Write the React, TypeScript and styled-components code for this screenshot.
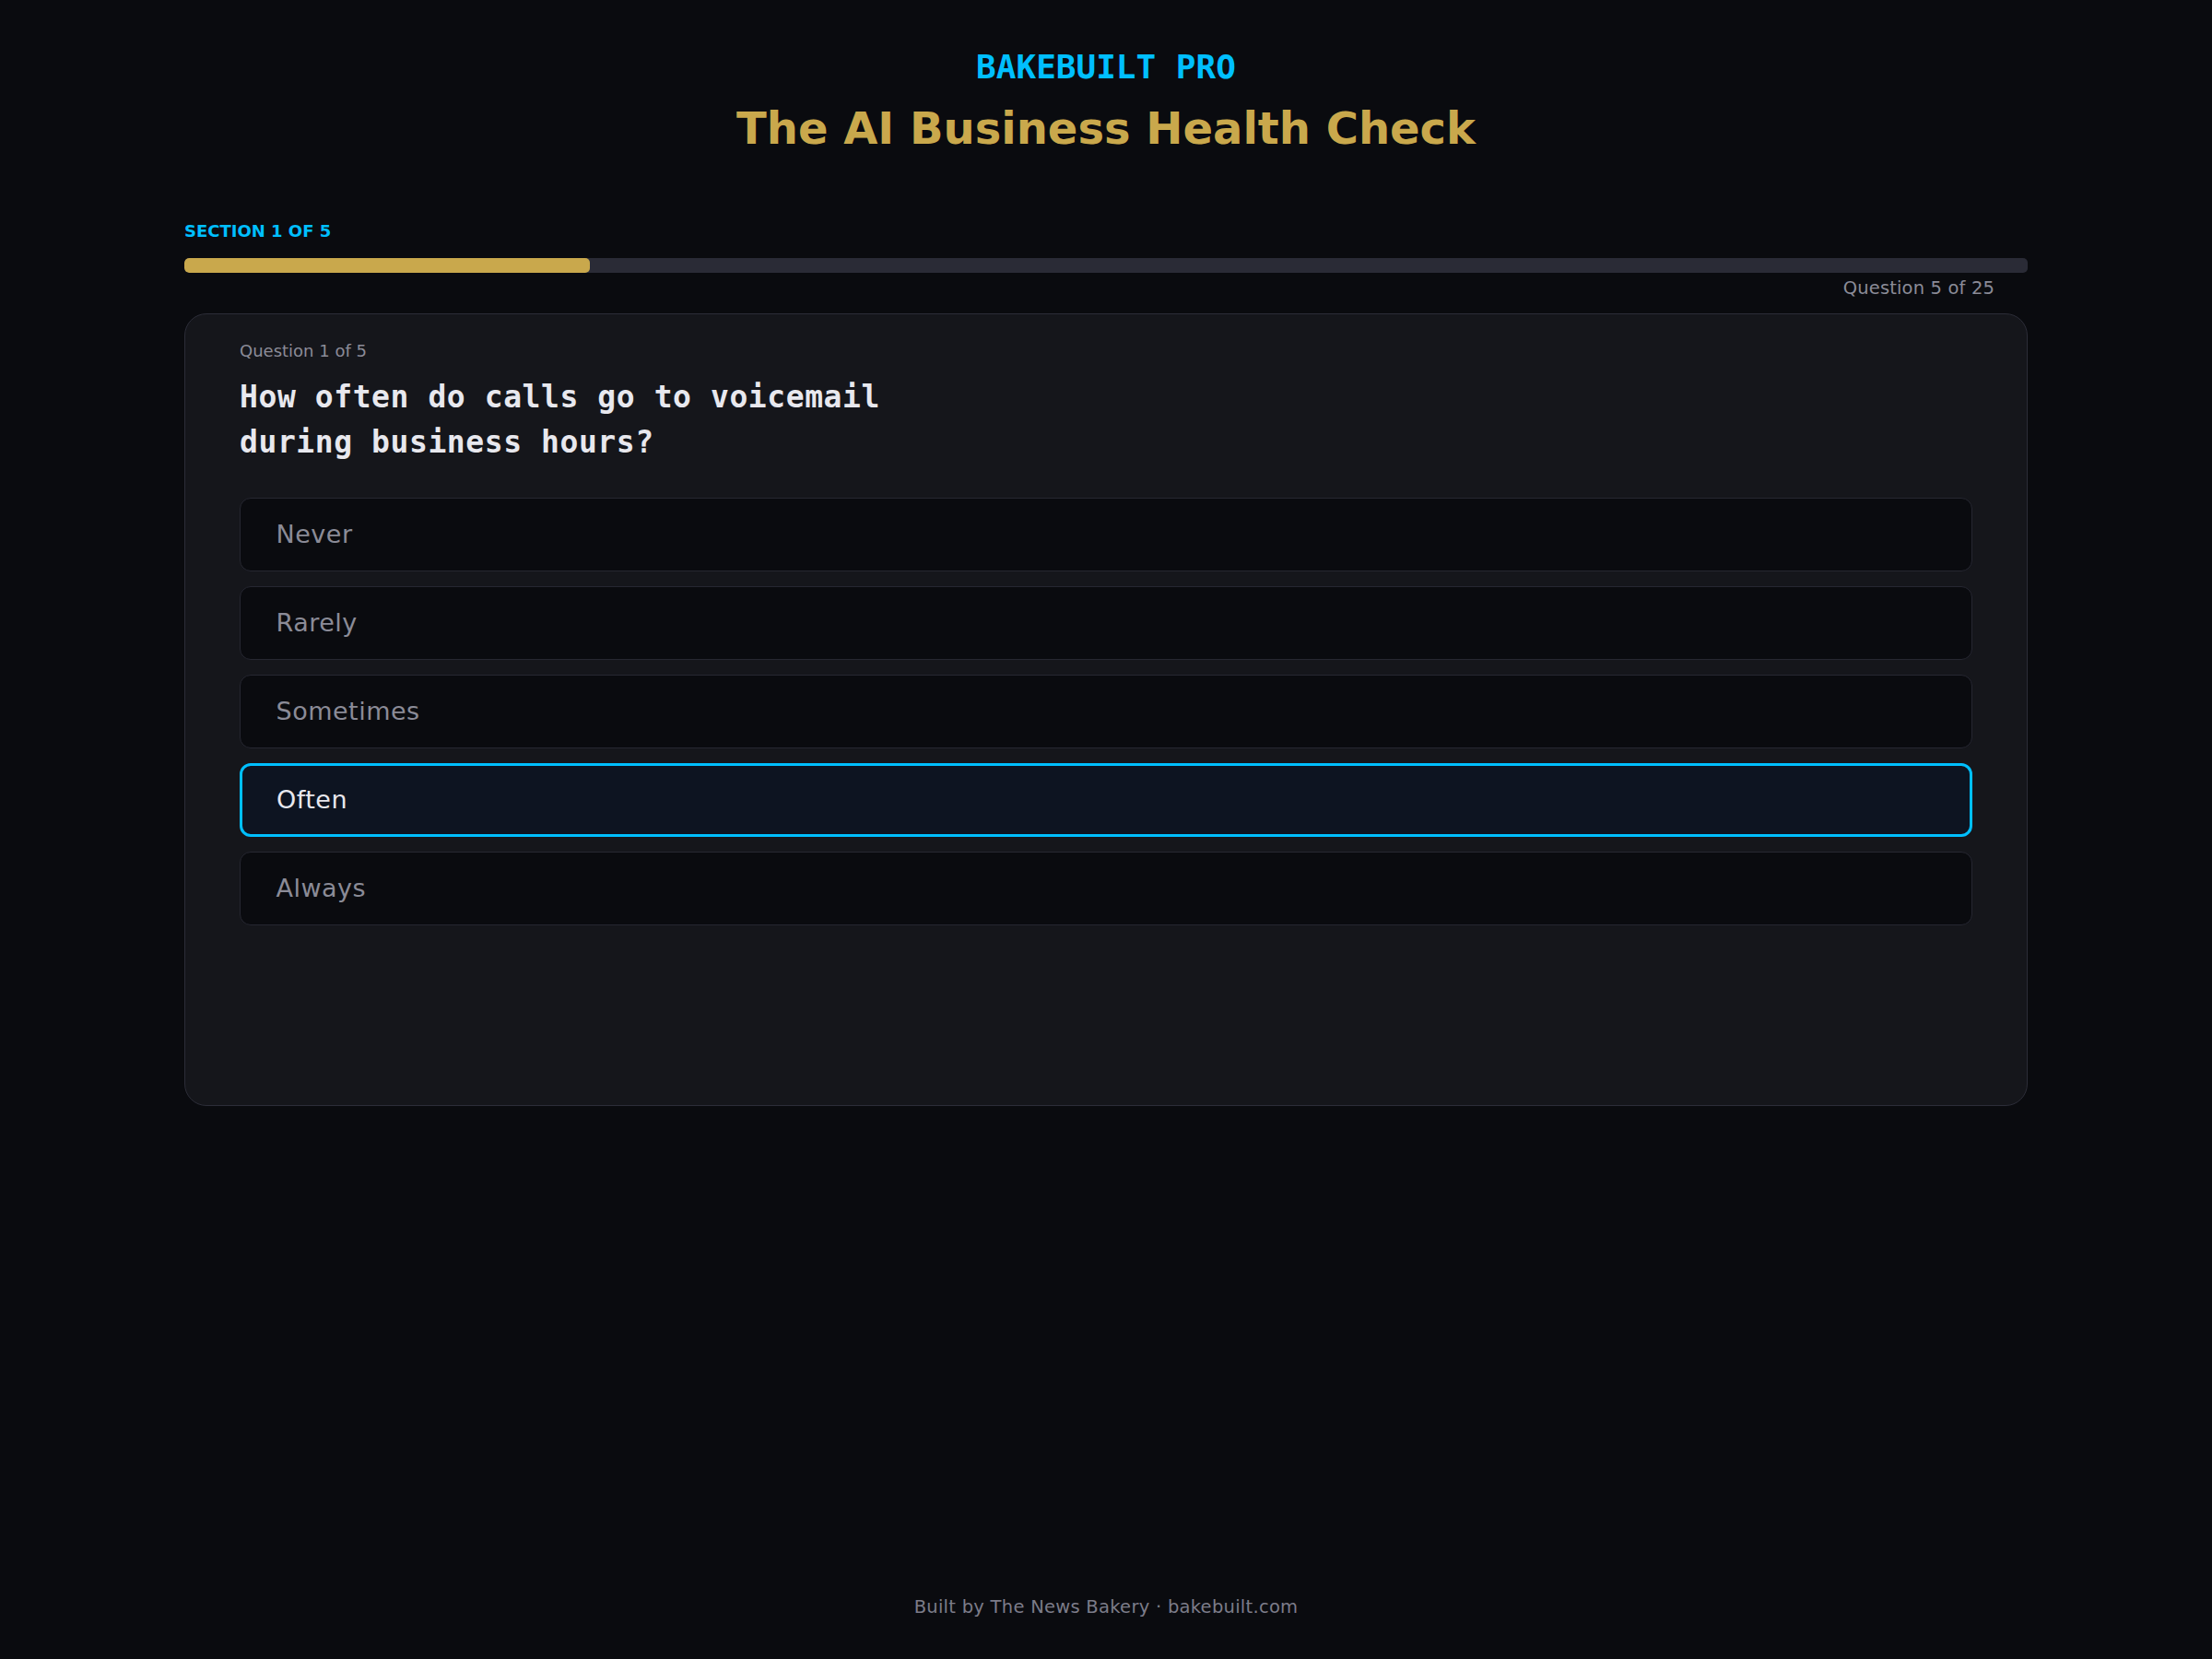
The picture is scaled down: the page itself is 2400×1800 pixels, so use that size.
import React from 'react'
import styled, { createGlobalStyle } from 'styled-components'

const colors = {
    bg: '#0a0b0f',
    card: '#15161b',
    cardBorder: '#2c2d38',
    option: '#0a0b0f',
    optionBorder: '#262731',
    selectedBg: '#0d1421',
    cyan: '#00bfff',
    gold: '#c9a84c',
    track: '#2a2b36',
    text: '#e8e8ee',
    muted: '#8b8b97',
    faint: '#7c7c89',
}

const GlobalStyle = createGlobalStyle`
    html, body {
        margin: 0;
        padding: 0;
        background: ${colors.bg};
    }
    body {
        font-family: 'DejaVu Sans', 'Noto Sans', sans-serif;
        color: ${colors.text};
    }
    * {
        box-sizing: border-box;
    }
`

const Page = styled.div`
    min-height: 100vh;
    display: flex;
    flex-direction: column;
    padding-top: 52px;
`

const Header = styled.header`
    display: flex;
    flex-direction: column;
    align-items: center;
`

const Brand = styled.div`
    font-family: 'DejaVu Sans Mono', 'Liberation Mono', monospace;
    font-weight: 700;
    font-size: 36px;
    line-height: 42px;
    color: ${colors.cyan};
`

const Title = styled.h1`
    margin: 17px 0 0;
    font-size: 48px;
    line-height: 56px;
    font-weight: 700;
    color: ${colors.gold};
`

const Main = styled.main`
    width: 2000px;
    margin: 73px auto 0;
`

const SectionLabel = styled.div`
    font-size: 18px;
    line-height: 22px;
    font-weight: 700;
    text-transform: uppercase;
    color: ${colors.cyan};
`

const Track = styled.div`
    margin-top: 18px;
    height: 16px;
    border-radius: 5px;
    background: ${colors.track};
    overflow: hidden;
`

const Fill = styled.div`
    height: 100%;
    border-radius: 5px;
    background: ${colors.gold};
`

const Count = styled.div`
    margin-top: 5px;
    padding-right: 36px;
    text-align: right;
    font-size: 19.5px;
    line-height: 24px;
    letter-spacing: 0.15px;
    color: ${colors.muted};
`

const Card = styled.section`
    margin-top: 15px;
    min-height: 860px;
    padding: 25.5px 59px 40px;
    background: ${colors.card};
    border: 1.5px solid ${colors.cardBorder};
    border-radius: 24px;
`

const QuestionLabel = styled.div`
    font-size: 18px;
    line-height: 27px;
    color: ${colors.muted};
`

const Question = styled.h2`
    margin: 12px 0 0;
    max-width: 730px;
    font-family: 'DejaVu Sans Mono', 'Liberation Mono', monospace;
    font-weight: 700;
    font-size: 33px;
    line-height: 49.5px;
    letter-spacing: 0.57px;
    color: ${colors.text};
`

const Options = styled.div`
    margin-top: 35px;
    display: flex;
    flex-direction: column;
    gap: 16px;
`

const Option = styled.button<{ $selected?: boolean }>`
    display: flex;
    align-items: center;
    height: 80px;
    padding: 0 ${p => (p.$selected ? '37px' : '38.5px')};
    font-family: 'DejaVu Sans', sans-serif;
    font-size: 27px;
    letter-spacing: 0.5px;
    text-align: left;
    border-radius: 12px;
    cursor: pointer;
    background: ${p => (p.$selected ? colors.selectedBg : colors.option)};
    border: ${p =>
        p.$selected
            ? `3px solid ${colors.cyan}`
            : `1.5px solid ${colors.optionBorder}`};
    color: ${p => (p.$selected ? colors.text : colors.muted)};
`

const Footer = styled.footer`
    margin-top: auto;
    padding-bottom: 44.5px;
    text-align: center;
    font-size: 19.5px;
    line-height: 24px;
    letter-spacing: 0.27px;
    color: ${colors.faint};
`

const answers = ['Never', 'Rarely', 'Sometimes', 'Often', 'Always']

export default function App() {
    const selected = 'Often'
    return (
        <>
            <GlobalStyle />
            <Page>
                <Header>
                    <Brand>BAKEBUILT PRO</Brand>
                    <Title>The AI Business Health Check</Title>
                </Header>
                <Main>
                    <SectionLabel>Section 1 of 5</SectionLabel>
                    <Track>
                        <Fill style={{ width: '22%' }} />
                    </Track>
                    <Count>Question 5 of 25</Count>
                    <Card>
                        <QuestionLabel>Question 1 of 5</QuestionLabel>
                        <Question>
                            How often do calls go to voicemail during business
                            hours?
                        </Question>
                        <Options>
                            {answers.map(a => (
                                <Option key={a} $selected={a === selected}>
                                    {a}
                                </Option>
                            ))}
                        </Options>
                    </Card>
                </Main>
                <Footer>Built by The News Bakery · bakebuilt.com</Footer>
            </Page>
        </>
    )
}
